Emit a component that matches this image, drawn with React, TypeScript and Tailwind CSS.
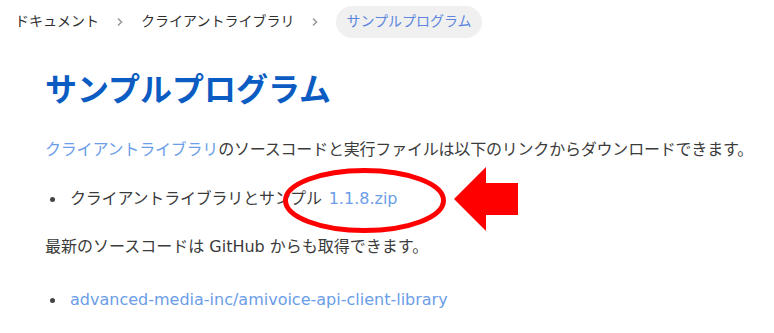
import React from "react"

function Chevron() {
  return (
    <svg width="8" height="10" viewBox="0 0 8 10" className="mx-[17px] shrink-0">
      <path d="M2 1.5 L5.5 5 L2 8.5" fill="none" stroke="#9a9a9a" strokeWidth="1.6" />
    </svg>
  )
}

function Bullet({ children }: { children: React.ReactNode }) {
  return (
    <div className="flex items-center h-[24px]">
      <span className="w-[5px] h-[5px] rounded-full bg-[#444] ml-[50px] mr-[15px]" />
      {children}
    </div>
  )
}

export default function App() {
  return (
    <div className="relative w-[774px] h-[333px] overflow-hidden bg-white font-['DejaVu_Sans','Noto_Sans_CJK_JP',sans-serif] text-[#3b3b3b]">
      {/* Breadcrumb */}
      <nav className="flex items-center h-[33px] mt-[5px] pl-[15px] text-[14px] text-[#2f2f2f]">
        <span>ドキュメント</span>
        <Chevron />
        <span>クライアントライブラリ</span>
        <Chevron />
        <span className="flex items-center h-[32px] px-[10px] rounded-full bg-[#f0f0f1] text-[#5b86dc]">
          サンプルプログラム
        </span>
      </nav>

      <h1 className="mt-[32px] pl-[45px] text-[32px] leading-[40px] font-bold text-[#0b5cc2]">
        サンプルプログラム
      </h1>

      <p className="mt-[28px] pl-[45px] text-[16px] leading-[24px] tracking-[-0.2px]">
        <span className="text-[#6b9de8]">クライアントライブラリ</span>
        のソースコードと実行ファイルは以下のリンクからダウンロードできます。
      </p>

      <div className="mt-[25px] text-[16px]">
        <Bullet>
          <span className="tracking-[-0.2px]">クライアントライブラリとサンプル</span>
          <span className="ml-[7px] text-[#6b9de8]">1.1.8.zip</span>
        </Bullet>
      </div>

      <p className="mt-[24px] pl-[45px] text-[16px] leading-[24px]">
        最新のソースコードは GitHub からも取得できます。
      </p>

      <div className="mt-[29px] text-[16px]">
        <Bullet>
          <span className="text-[#6b9de8]">advanced-media-inc/amivoice-api-client-library</span>
        </Bullet>
      </div>

      {/* Annotation overlay */}
      <svg className="absolute left-0 top-0 pointer-events-none" width="774" height="333">
        <ellipse cx="364.5" cy="200.5" rx="79" ry="30" fill="none" stroke="#ff0000" strokeWidth="5" />
        <polygon points="454,199 486,167 486,183 518,183 518,215 486,215 486,231" fill="#ff0000" />
      </svg>
    </div>
  )
}
